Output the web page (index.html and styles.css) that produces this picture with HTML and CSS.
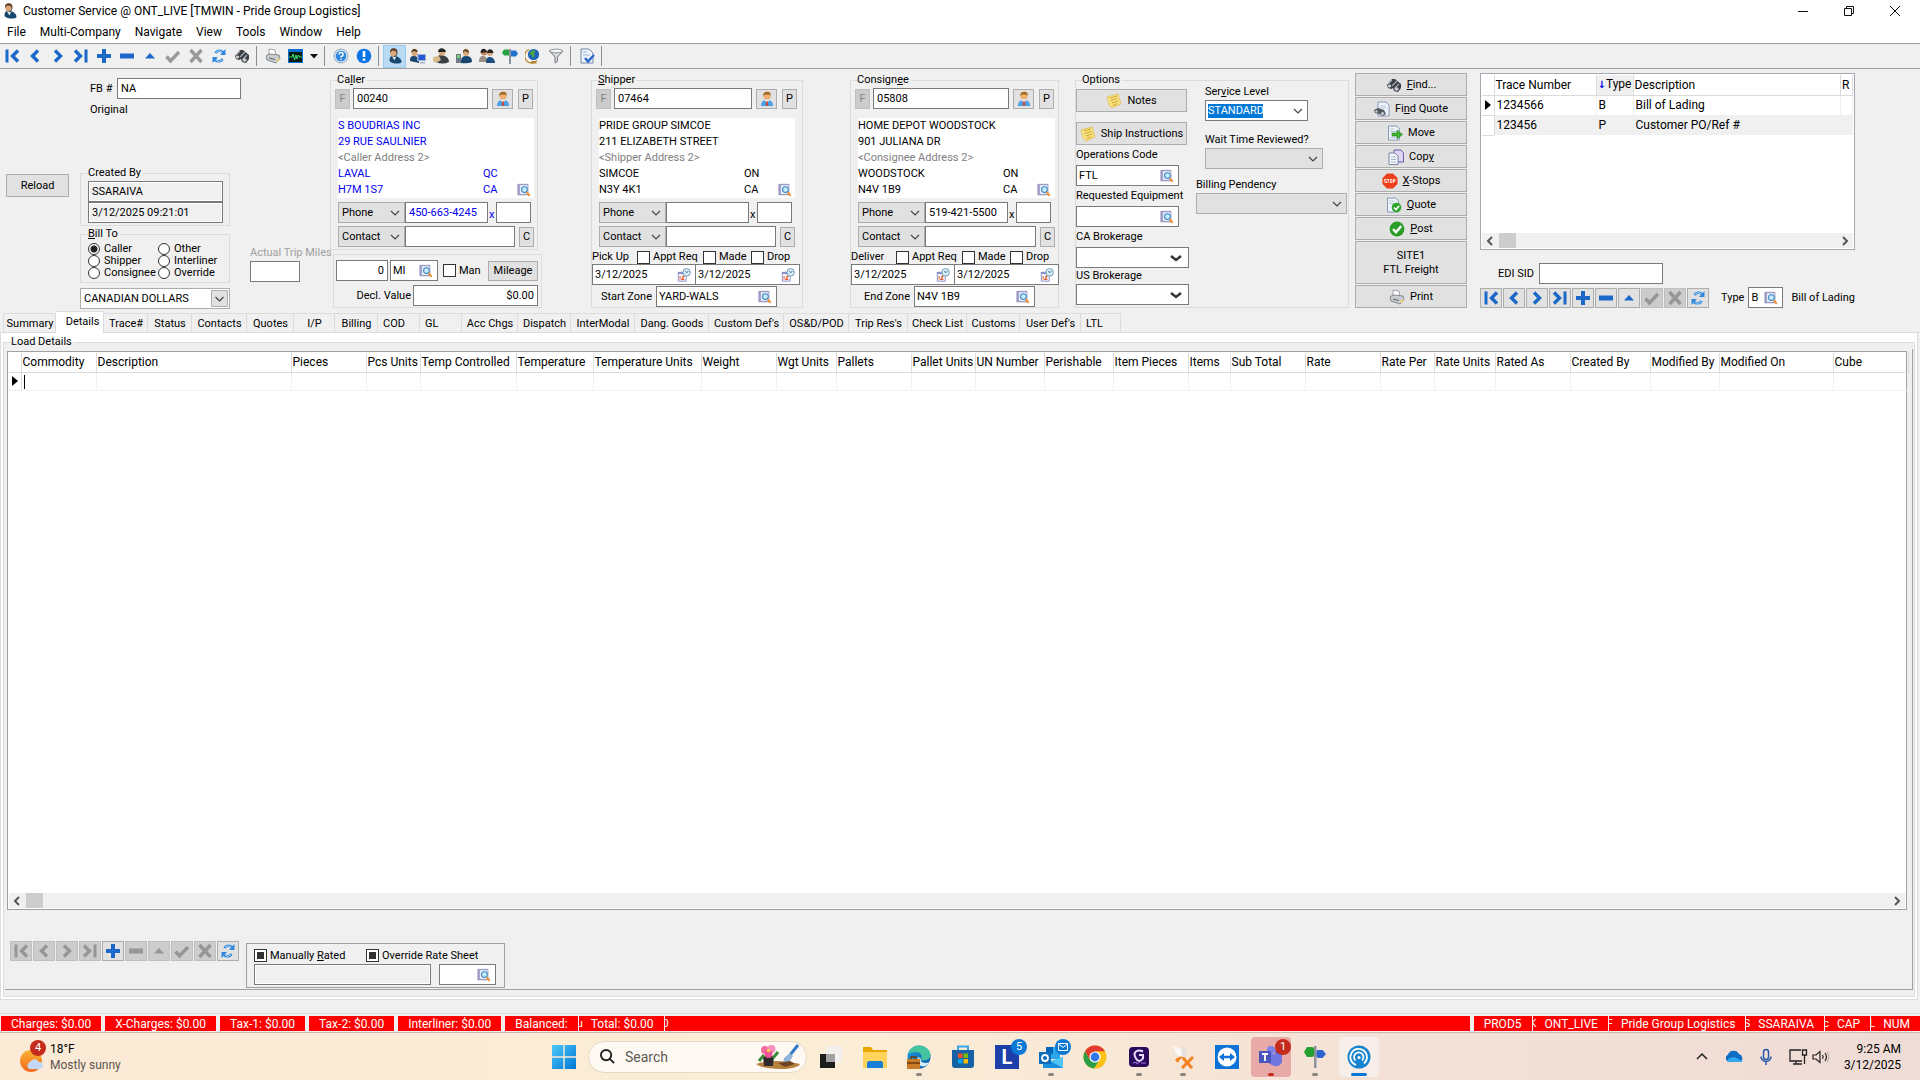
FILE: index.html
```html
<!DOCTYPE html>
<html lang="en">
<head>
<meta charset="utf-8">
<title>Customer Service @ ONT_LIVE [TMWIN - Pride Group Logistics]</title>
<link rel="stylesheet" href="styles.css">
</head>
<body>
<svg class="sprite" aria-hidden="true">
  <defs>
    <linearGradient id="g-win" x1="0" y1="0" x2="1" y2="1"><stop offset="0" stop-color="#4cc8fa"/><stop offset="1" stop-color="#0078d4"/></linearGradient>
    <linearGradient id="g-edge" x1="0" y1="0" x2="1" y2="1"><stop offset="0" stop-color="#1b9de2"/><stop offset="1" stop-color="#0c59a4"/></linearGradient>
    <linearGradient id="g-sun" x1="0" y1="0" x2="0" y2="1"><stop offset="0" stop-color="#fbb034"/><stop offset="1" stop-color="#f26a1b"/></linearGradient>
  </defs>
  <symbol id="first" viewBox="0 0 16 16"><path d="M3 1.500v13" stroke="currentColor" stroke-width="3"/><path d="M14 2.500L8.500 8l5.500 5.500" fill="none" stroke="currentColor" stroke-width="3.400"/></symbol>
  <symbol id="prev" viewBox="0 0 16 16"><path d="M11 2.500L5.500 8l5.500 5.500" fill="none" stroke="currentColor" stroke-width="3.400"/></symbol>
  <symbol id="next" viewBox="0 0 16 16"><path d="M5 2.500L10.500 8L5 13.500" fill="none" stroke="currentColor" stroke-width="3.400"/></symbol>
  <symbol id="last" viewBox="0 0 16 16"><path d="M13 1.500v13" stroke="currentColor" stroke-width="3"/><path d="M2 2.500L7.500 8L2 13.500" fill="none" stroke="currentColor" stroke-width="3.400"/></symbol>
  <symbol id="plus" viewBox="0 0 16 16"><path d="M8 1v14M1 8h14" stroke="currentColor" stroke-width="4"/></symbol>
  <symbol id="minus" viewBox="0 0 16 16"><path d="M1 5.500h14v5H1z" fill="currentColor"/></symbol>
  <symbol id="up" viewBox="0 0 16 16"><path d="M3 10.500L8 5l5 5.500z" fill="currentColor"/></symbol>
  <symbol id="tick" viewBox="0 0 16 16"><path d="M1.500 8.500l4 4.500L14 4" fill="none" stroke="currentColor" stroke-width="3.400"/></symbol>
  <symbol id="cross" viewBox="0 0 16 16"><path d="M2.500 2l11 12M13.500 2l-11 12" fill="none" stroke="currentColor" stroke-width="3.400"/></symbol>
  <symbol id="refresh" viewBox="0 0 16 16"><path d="M4.500 5.200A4.800 4.800 0 0 1 12 4M11.500 10.800A4.800 4.800 0 0 1 4 12" fill="none" stroke="#2f86dc" stroke-width="2.600"/><path d="M14.500 1v6H9zM1.500 15V9H7z" fill="#2f86dc"/><path d="M5 4.500A4.500 4.500 0 0 1 11 3.500M11 11.500A4.500 4.500 0 0 1 5 12.500" fill="none" stroke="#a9d6fb" stroke-width="1"/></symbol>
  <symbol id="binoculars" viewBox="0 0 16 16"><path d="M1 8l5-6 3 0 6 5 0 4-3 4-4-1-1-3-2 1-3-1z" fill="#3a3f45"/><path d="M2 7l4-4M6 9l5-5M9 11l4-4" stroke="#a9afb5" stroke-width="1.200"/><ellipse cx="10.500" cy="12" rx="2.200" ry="1.800" fill="#c7ccd0"/><ellipse cx="3.500" cy="9" rx="1.700" ry="1.500" fill="#c7ccd0"/></symbol>
  <symbol id="printer" viewBox="0 0 16 16"><path d="M4 1l6 1 1 6-7-1z" fill="#fff" stroke="#8b9096" stroke-width=".8"/><path d="M1 8l3-2 10 1 1 4-4 4-9-3z" fill="#c9cdd1" stroke="#6f7479" stroke-width=".8"/><path d="M4 10l6 1.500" stroke="#5b6065"/><path d="M11 13l3-3 1 1-3 3z" fill="#f7dd6a"/></symbol>
  <symbol id="scope" viewBox="0 0 16 16"><path d="M0 1h15v14H0z" fill="#0b6fd3"/><path d="M1 4h13v10H1z" fill="#071b12"/><path d="M1 9h3l1-3 1.500 6L8 7l1 4 1.500-4 1 2H14" fill="none" stroke="#37e06a"/></symbol>
  <symbol id="drop" viewBox="0 0 8 16"><path d="M0 6h8l-4 4.500z" fill="#111"/></symbol>
  <symbol id="help" viewBox="0 0 16 16"><circle cx="8" cy="8" r="7" fill="#cfe4f8" stroke="#98a8b8"/><circle cx="8" cy="8" r="5.200" fill="#2b86db"/><path d="M6 6.500a2 2 0 1 1 2 2v1M8 10.600v1.400" fill="none" stroke="#fff" stroke-width="1.400"/></symbol>
  <symbol id="alert" viewBox="0 0 16 16"><circle cx="8" cy="8" r="7.300" fill="#0c74e4"/><path d="M8 3v6M8 10.500v2.300" stroke="#fff" stroke-width="2.600"/></symbol>
  <symbol id="agent" viewBox="0 0 16 16"><path d="M2.500 13c0-4 1-5 4-5 5 0 8 3 8 6-1 2-9 2.500-12-1z" fill="#17466f"/><path d="M5 8.500l2.500 4L9 9z" fill="#e9eef3"/><ellipse cx="6.500" cy="4.800" rx="3.200" ry="4" fill="#d9a97d"/><path d="M3.200 5C2.500 1 5 0 7.500.3s3.800 3 2.500 6L8.500 3 5 2.500z" fill="#5e4128"/><path d="M9.800 5.500c0 2-1 3-3 3" fill="none" stroke="#444"/></symbol>
  <symbol id="agentpc" viewBox="0 0 16 16"><path d="M0 13c0-4 1-5 4-5s5 2 5 7z" fill="#17466f"/><ellipse cx="4.500" cy="4.500" rx="3" ry="3.800" fill="#d9a97d"/><path d="M1.300 5C1 0 7 0 7.800 4L3 3z" fill="#4e3521"/><path d="M7 6h9v7H7zM10 14h5v1.500h-5z" fill="#9fb0c8"/><path d="M8.500 7h6.500v5H8.500z" fill="#2458d8"/></symbol>
  <symbol id="courier" viewBox="0 0 16 16"><path d="M3 14c0-5 2-7 5-7s8 2 8 7q-6 3-13 0z" fill="#3a3f45"/><circle cx="9" cy="4.500" r="3.200" fill="#d9a97d"/><path d="M5 4c0-5 7-5 8 0z" fill="#22262a"/><path d="M0 9l6-1 2 4-5 3-3-2z" fill="#d7b98a"/></symbol>
  <symbol id="agentgrid" viewBox="0 0 16 16"><path d="M5 15c0-5 1-7 5-7s6 2 6 6q-4 2-11 1z" fill="#17466f"/><ellipse cx="10" cy="4.500" rx="3" ry="3.800" fill="#d9a97d"/><path d="M7 5C6 0 13 0 13 5L9 3z" fill="#5e4128"/><path d="M0 6h5v9H0z" fill="#6f7b86"/><path d="M1 7h3v3H1z" fill="#73d26a"/></symbol>
  <symbol id="people" viewBox="0 0 16 16"><path d="M0 14c0-5 2-6 4-6s5 2 5 6z" fill="#9d8f86"/><path d="M7 15c0-5 2-6 4-6s5 2 5 6z" fill="#1c4f86"/><circle cx="5" cy="4.500" r="3" fill="#c08a62"/><circle cx="11" cy="5" r="3" fill="#d9a97d"/><path d="M1.500 5c0-6 6-5 6.500-1zM8 5c0-5 6-5 6.500 0z" fill="#2a2320"/></symbol>
  <symbol id="sign" viewBox="0 0 16 16"><path d="M7 1h2v15H7z" fill="#8d949b"/><path d="M0 4.500L2 1.500h5v6H2z" fill="#27a342"/><path d="M9 2.500h5l2 3L14 8.500H9z" fill="#2472cf"/></symbol>
  <symbol id="globe" viewBox="0 0 16 16"><path d="M5 15.500h7l-2-2.500H7z" fill="#a97b25"/><path d="M4 1.500a7 7 0 1 0 8 11" fill="none" stroke="#b98a2c" stroke-width="1.300"/><circle cx="8.500" cy="6.500" r="5.600" fill="#1d62b8"/><path d="M6 3l3-1 1.500 2-1.500 2 1 2-2.500 2-1-3-2-1z" fill="#49a24a"/></symbol>
  <symbol id="funnel" viewBox="0 0 16 16"><path d="M1.500 3L7 9v6l2.500-1.500V9L15 3z" fill="#d4d7da" stroke="#777c82"/><ellipse cx="8.200" cy="3" rx="6.500" ry="1.800" fill="#f4f5f6" stroke="#777c82" stroke-width=".8"/></symbol>
  <symbol id="doccheck" viewBox="0 0 16 16"><path d="M2 1h8l4 4v10H2z" fill="#eef4fb" stroke="#7187a5"/><path d="M4 4h4M4 7h7" stroke="#9fb4cf"/><path d="M6 10l3 3.500L15 7" fill="none" stroke="#2a66c8" stroke-width="2.400"/></symbol>
  <symbol id="person" viewBox="0 0 16 16"><path d="M2 15c0-4 2-6 6-6s6 2 6 6z" fill="#4aa0e4"/><path d="M6 9l2 4 2-4z" fill="#fff"/><path d="M7.400 10h1.200l.6 4L8 15l-1.200-1z" fill="#e0392b"/><circle cx="8" cy="5" r="3.600" fill="#efb070"/><path d="M4.200 5C4 1 7 .5 9 .7s3 2 2.800 4L10 3.500H6z" fill="#a06a1c"/></symbol>
  <symbol id="lookup" viewBox="0 0 16 16"><path d="M1 1.500h11.500v12H1z" fill="#a9a6cf" stroke="#7f7cab" stroke-width=".8"/><path d="M3.500 2.500H12v10H3.500z" fill="#e6effa"/><circle cx="8.500" cy="7.500" r="3.300" fill="#c8ecfb" stroke="#3b87c4" stroke-width="1.200"/><path d="M11 10.500l3.500 4" stroke="#ee9440" stroke-width="2.400"/></symbol>
  <symbol id="calendar" viewBox="0 0 16 16"><path d="M1.500 5h9v10h-9z" fill="#fff" stroke="#7c84c0"/><path d="M1 4.500h10v2.500H1z" fill="#8b90cc"/><path d="M3.500 9v4M5.500 9.500h2.500l-2.500 3.500h3" fill="none" stroke="#e0562a" stroke-width="1.200"/><circle cx="11" cy="5" r="4.300" fill="#d8f0fc" stroke="#5e8fb4"/><path d="M9.500 3.500L11 5.500l2-2" fill="none" stroke="#2c4c66"/></symbol>
  <symbol id="note" viewBox="0 0 16 16"><path d="M1 4l11-3 3 10-9 4-3-3z" fill="#fbe384" stroke="#d8b84a" stroke-width=".7"/><path d="M4 5l7-2M4.500 7.500l7-2M5.500 10l7-2M6.500 12.500l5-1.800" stroke="#c9a52e"/></symbol>
  <symbol id="findquote" viewBox="0 0 16 16"><path d="M4 1h8l3 3v11H4z" fill="#edf3fb" stroke="#7187a5" stroke-width=".8"/><path d="M6 5h6M6 7h6" stroke="#b8c7da"/><path d="M0 9l4-2 6 2 2 4-3 2-4-2-4-1z" fill="#555a60"/><circle cx="8.500" cy="12.500" r="1.600" fill="#c7ccd0"/><circle cx="2.500" cy="10.500" r="1.200" fill="#c7ccd0"/></symbol>
  <symbol id="move" viewBox="0 0 16 16"><path d="M1.500 1h8l3 3v11h-11z" fill="#edf3fb" stroke="#7187a5" stroke-width=".8"/><path d="M3 4h4M3 6.500h6M3 12.500h6" stroke="#b8c7da"/><path d="M5 8h5V5l5.500 4.500L10 14v-3H5z" fill="#3cb52e" stroke="#257c1c" stroke-width=".6"/></symbol>
  <symbol id="copy" viewBox="0 0 16 16"><path d="M6 1h7l2.500 3v9H6z" fill="#ddd6f2" stroke="#7257b0"/><path d="M1 4h6l3 3v8.500H1z" fill="#f3f6fb" stroke="#7c86a8"/><path d="M3 8h5M3 10.500h5M3 13h5" stroke="#a8b6cc"/></symbol>
  <symbol id="stop" viewBox="0 0 16 16"><path d="M5 .5h6L15.500 5v6L11 15.500H5L.5 11V5z" fill="#ee3f1c"/><path d="M4.500 6.500h-2v1.500h2v1.500h-2M5 6.500h2.500M6.300 6.500V10M8.500 6.500h1.500v3H8.500zM11.500 10V6.500H13v1.700h-1.500" stroke="#fff" stroke-width=".8" fill="none"/></symbol>
  <symbol id="quote" viewBox="0 0 16 16"><path d="M1.500 1h8l3 3v11h-11z" fill="#edf3fb" stroke="#7187a5" stroke-width=".8"/><path d="M3 4h5M3 6.500h5" stroke="#b8c7da"/><circle cx="10.500" cy="10.500" r="4.800" fill="#2fa52c"/><path d="M8 10.500l2 2 3.200-3.700" fill="none" stroke="#fff" stroke-width="1.600"/></symbol>
  <symbol id="post" viewBox="0 0 16 16"><circle cx="8" cy="8" r="7.400" fill="#2a9d27"/><path d="M4 8.200l3 3L12.300 5" fill="none" stroke="#fff" stroke-width="2.400"/></symbol>
</svg>

<div class="app">
  <header class="titlebar">
    <svg class="ic"><use href="#agent"/></svg>
    <h1>Customer Service @ ONT_LIVE [TMWIN - Pride Group Logistics]</h1>
    <div class="winbtns">
      <button aria-label="Minimize"><svg viewBox="0 0 10 10"><path d="M0 5.500h10"/></svg></button>
      <button aria-label="Restore"><svg viewBox="0 0 10 10"><path d="M.5 2.500h7v7h-7zM2.500 2.500v-2h7v7h-2"/></svg></button>
      <button aria-label="Close"><svg viewBox="0 0 10 10"><path d="M0 0l10 10M10 0L0 10"/></svg></button>
    </div>
  </header>
  <nav class="menubar">
    <a href="#">File</a><a href="#">Multi-Company</a><a href="#">Navigate</a><a href="#">View</a><a href="#">Tools</a><a href="#">Window</a><a href="#">Help</a>
  </nav>

  <div class="toolbar" role="toolbar">
    <button aria-label="First"><svg class="ic"><use href="#first"/></svg></button>
    <button aria-label="Previous"><svg class="ic"><use href="#prev"/></svg></button>
    <button aria-label="Next"><svg class="ic"><use href="#next"/></svg></button>
    <button aria-label="Last"><svg class="ic"><use href="#last"/></svg></button>
    <button aria-label="Insert"><svg class="ic"><use href="#plus"/></svg></button>
    <button aria-label="Delete"><svg class="ic"><use href="#minus"/></svg></button>
    <button aria-label="Edit"><svg class="ic"><use href="#up"/></svg></button>
    <button aria-label="Save" disabled><svg class="ic"><use href="#tick"/></svg></button>
    <button aria-label="Cancel" disabled><svg class="ic"><use href="#cross"/></svg></button>
    <button aria-label="Refresh"><svg class="ic"><use href="#refresh"/></svg></button>
    <button aria-label="Find"><svg class="ic"><use href="#binoculars"/></svg></button>
    <i class="sep"></i>
    <button aria-label="Print"><svg class="ic"><use href="#printer"/></svg></button>
    <button aria-label="Monitor"><svg class="ic"><use href="#scope"/></svg></button>
    <button class="narrow" aria-label="More"><svg class="ic"><use href="#drop"/></svg></button>
    <i class="sep"></i>
    <button aria-label="Help"><svg class="ic"><use href="#help"/></svg></button>
    <button aria-label="Alerts"><svg class="ic"><use href="#alert"/></svg></button>
    <i class="sep"></i>
    <button class="on" aria-label="Customer service"><svg class="ic"><use href="#agent"/></svg></button>
    <button aria-label="Dispatch"><svg class="ic"><use href="#agentpc"/></svg></button>
    <button aria-label="Drivers"><svg class="ic"><use href="#courier"/></svg></button>
    <button aria-label="Billing"><svg class="ic"><use href="#agentgrid"/></svg></button>
    <button aria-label="Customers"><svg class="ic"><use href="#people"/></svg></button>
    <button aria-label="Routes"><svg class="ic"><use href="#sign"/></svg></button>
    <button aria-label="Map"><svg class="ic"><use href="#globe"/></svg></button>
    <button aria-label="Filter"><svg class="ic"><use href="#funnel"/></svg></button>
    <i class="sep"></i>
    <button aria-label="Audit"><svg class="ic"><use href="#doccheck"/></svg></button>
    <i class="sep"></i>
  </div>

  <main class="form">
    <section class="bill">
      <div class="fb"><label for="fb">FB #</label><input id="fb" value="NA"></div>
      <p class="kind">Original</p>
      <div class="billgrid">
        <button class="btn reload">Reload</button>
        <fieldset class="created">
          <legend>Created By</legend>
          <input class="ro" aria-label="Created by" value="SSARAIVA" readonly>
          <input class="ro" aria-label="Created on" value="3/12/2025 09:21:01" readonly>
        </fieldset>
        <fieldset class="billto">
          <legend><u>B</u>ill To</legend>
          <label><input type="radio" name="bt" checked>Caller</label>
          <label><input type="radio" name="bt">Other</label>
          <label><input type="radio" name="bt">Shipper</label>
          <label><input type="radio" name="bt">Interliner</label>
          <label><input type="radio" name="bt">Consignee</label>
          <label><input type="radio" name="bt">Override</label>
        </fieldset>
        <div class="miles"><label for="atm">Actual Trip Miles</label><input id="atm"></div>
        <select class="currency" aria-label="Currency"><option>CANADIAN DOLLARS</option></select>
      </div>
    </section>

    <section class="callercol">
      <fieldset class="party">
        <legend>Ca<u>l</u>ler</legend>
        <div class="code">
          <button class="btn mini" disabled>F</button><input aria-label="Caller code" value="00240">
          <button class="btn pic" aria-label="Caller profile"><svg class="ic"><use href="#person"/></svg></button><button class="btn mini">P</button>
        </div>
        <div class="addr blue">
          <p>S BOUDRIAS INC</p><p>29 RUE SAULNIER</p><p class="hint">&lt;Caller Address 2&gt;</p>
          <p class="two"><span>LAVAL</span><span>QC</span></p>
          <p class="two"><span>H7M 1S7</span><span>CA</span><svg class="ic"><use href="#lookup"/></svg></p>
        </div>
        <div class="line">
          <select class="grey" aria-label="Caller phone type"><option>Phone</option></select><input class="tel blue" aria-label="Caller phone" value="450-663-4245"><span class="x blue">x</span><input class="ext" aria-label="Caller extension">
        </div>
        <div class="line">
          <select class="grey" aria-label="Caller contact type"><option>Contact</option></select><input class="contact" aria-label="Caller contact"><button class="btn mini">C</button>
        </div>
      </fieldset>
      <div class="distance">
        <div class="drow">
          <input class="num dist" aria-label="Distance" value="0">
          <span class="look unit"><input aria-label="Unit" value="MI"><svg class="ic"><use href="#lookup"/></svg></span>
          <label><input type="checkbox">Man</label>
          <button class="btn">Mileage</button>
        </div>
        <div class="drow decl"><label for="decl">Decl. Value</label><input id="decl" class="num" value="$0.00"></div>
      </div>
    </section>

    <fieldset class="party shipper">
      <legend><u>S</u>hipper</legend>
      <div class="code">
        <button class="btn mini" disabled>F</button><input aria-label="Shipper code" value="07464">
        <button class="btn pic" aria-label="Shipper profile"><svg class="ic"><use href="#person"/></svg></button><button class="btn mini">P</button>
      </div>
      <div class="addr">
        <p>PRIDE GROUP SIMCOE</p><p>211 ELIZABETH STREET</p><p class="hint">&lt;Shipper Address 2&gt;</p>
        <p class="two"><span>SIMCOE</span><span>ON</span></p>
        <p class="two"><span>N3Y 4K1</span><span>CA</span><svg class="ic"><use href="#lookup"/></svg></p>
      </div>
      <div class="line">
        <select class="grey" aria-label="Shipper phone type"><option>Phone</option></select><input class="tel" aria-label="Shipper phone"><span class="x">x</span><input class="ext" aria-label="Shipper extension">
      </div>
      <div class="line">
        <select class="grey" aria-label="Shipper contact type"><option>Contact</option></select><input class="contact" aria-label="Shipper contact"><button class="btn mini">C</button>
      </div>
      <div class="checks"><span>Pick Up</span><label><input type="checkbox">Appt Req</label><label><input type="checkbox">Made</label><label><input type="checkbox">Drop</label></div>
      <div class="dates">
        <span class="look"><input aria-label="Pick up from" value="3/12/2025"><svg class="ic"><use href="#calendar"/></svg></span>
        <span class="look"><input aria-label="Pick up to" value="3/12/2025"><svg class="ic"><use href="#calendar"/></svg></span>
      </div>
      <div class="zone"><label for="sz">Start Zone</label><span class="look"><input id="sz" value="YARD-WALS"><svg class="ic"><use href="#lookup"/></svg></span></div>
    </fieldset>

    <fieldset class="party consignee">
      <legend>Consign<u>e</u>e</legend>
      <div class="code">
        <button class="btn mini" disabled>F</button><input aria-label="Consignee code" value="05808">
        <button class="btn pic" aria-label="Consignee profile"><svg class="ic"><use href="#person"/></svg></button><button class="btn mini">P</button>
      </div>
      <div class="addr">
        <p>HOME DEPOT WOODSTOCK</p><p>901 JULIANA DR</p><p class="hint">&lt;Consignee Address 2&gt;</p>
        <p class="two"><span>WOODSTOCK</span><span>ON</span></p>
        <p class="two"><span>N4V 1B9</span><span>CA</span><svg class="ic"><use href="#lookup"/></svg></p>
      </div>
      <div class="line">
        <select class="grey" aria-label="Consignee phone type"><option>Phone</option></select><input class="tel" aria-label="Consignee phone" value="519-421-5500"><span class="x">x</span><input class="ext" aria-label="Consignee extension">
      </div>
      <div class="line">
        <select class="grey" aria-label="Consignee contact type"><option>Contact</option></select><input class="contact" aria-label="Consignee contact"><button class="btn mini">C</button>
      </div>
      <div class="checks"><span>Deliver</span><label><input type="checkbox">Appt Req</label><label><input type="checkbox">Made</label><label><input type="checkbox">Drop</label></div>
      <div class="dates">
        <span class="look"><input aria-label="Deliver from" value="3/12/2025"><svg class="ic"><use href="#calendar"/></svg></span>
        <span class="look"><input aria-label="Deliver to" value="3/12/2025"><svg class="ic"><use href="#calendar"/></svg></span>
      </div>
      <div class="zone"><label for="ez">End Zone</label><span class="look"><input id="ez" value="N4V 1B9"><svg class="ic"><use href="#lookup"/></svg></span></div>
    </fieldset>

    <fieldset class="options">
      <legend>Options</legend>
      <div class="optcols">
        <div class="optleft">
          <button class="btn"><svg class="ic"><use href="#note"/></svg>Notes</button>
          <button class="btn"><svg class="ic"><use href="#note"/></svg>Ship Instructions</button>
          <label for="opc">Operations Code</label>
          <span class="look"><input id="opc" value="FTL"><svg class="ic"><use href="#lookup"/></svg></span>
          <label for="req">Requested Equipment</label>
          <span class="look"><input id="req"><svg class="ic"><use href="#lookup"/></svg></span>
          <label for="cab">CA Brokerage</label>
          <select id="cab" class="bold"><option></option></select>
          <label for="usb">US Brokerage</label>
          <select id="usb" class="bold"><option></option></select>
        </div>
        <div class="optright">
          <label for="svc">Ser<u>v</u>ice Level</label>
          <div class="combo"><input id="svc" value="STANDARD"><svg viewBox="0 0 10 10"><path d="M1 3l4 4 4-4"/></svg></div>
          <label for="wait">Wait Time Reviewed?</label>
          <select id="wait" class="grey"><option></option></select>
          <label for="pend" class="out">Billing Pendency</label>
          <select id="pend" class="grey out"><option></option></select>
        </div>
      </div>
    </fieldset>

    <div class="actions">
      <button class="btn"><svg class="ic"><use href="#binoculars"/></svg><span><u>F</u>ind...</span></button>
      <button class="btn"><svg class="ic"><use href="#findquote"/></svg><span>Fi<u>n</u>d Quote</span></button>
      <button class="btn"><svg class="ic"><use href="#move"/></svg><span>Move</span></button>
      <button class="btn"><svg class="ic"><use href="#copy"/></svg><span>Cop<u>y</u></span></button>
      <button class="btn"><svg class="ic"><use href="#stop"/></svg><span><u>X</u>-Stops</span></button>
      <button class="btn"><svg class="ic"><use href="#quote"/></svg><span><u>Q</u>uote</span></button>
      <button class="btn"><svg class="ic"><use href="#post"/></svg><span><u>P</u>ost</span></button>
      <button class="btn"><span>SITE1<br>FTL Freight</span></button>
      <button class="btn"><svg class="ic"><use href="#printer"/></svg><span>Print</span></button>
    </div>

    <section class="trace">
      <div class="tracebox">
        <table>
          <colgroup><col class="c-mark"><col class="c-num"><col class="c-type"><col><col class="c-r"></colgroup>
          <thead><tr><th></th><th>Trace Number</th><th class="sorted"><b>↓</b>Type</th><th>Description</th><th>R</th></tr></thead>
          <tbody>
            <tr><td class="mark current"></td><td>1234566</td><td>B</td><td>Bill of Lading</td><td></td></tr>
            <tr class="alt"><td class="mark"></td><td>123456</td><td>P</td><td>Customer PO/Ref #</td><td></td></tr>
          </tbody>
        </table>
        <div class="hscroll"><svg viewBox="0 0 10 10"><path d="M7 1L3 5l4 4"/></svg><i></i><svg viewBox="0 0 10 10"><path d="M3 1l4 4-4 4"/></svg></div>
      </div>
      <div class="edi"><label for="edi">EDI SID</label><input id="edi"></div>
      <div class="tracenav">
        <div class="navbar">
          <button class="btn" aria-label="First"><svg class="ic"><use href="#first"/></svg></button>
          <button class="btn" aria-label="Previous"><svg class="ic"><use href="#prev"/></svg></button>
          <button class="btn" aria-label="Next"><svg class="ic"><use href="#next"/></svg></button>
          <button class="btn" aria-label="Last"><svg class="ic"><use href="#last"/></svg></button>
          <button class="btn" aria-label="Insert"><svg class="ic"><use href="#plus"/></svg></button>
          <button class="btn" aria-label="Delete"><svg class="ic"><use href="#minus"/></svg></button>
          <button class="btn" aria-label="Edit"><svg class="ic"><use href="#up"/></svg></button>
          <button class="btn" aria-label="Save" disabled><svg class="ic"><use href="#tick"/></svg></button>
          <button class="btn" aria-label="Cancel" disabled><svg class="ic"><use href="#cross"/></svg></button>
          <button class="btn" aria-label="Refresh"><svg class="ic"><use href="#refresh"/></svg></button>
        </div>
        <label for="tt">Type</label>
        <span class="look"><input id="tt" value="B"><svg class="ic"><use href="#lookup"/></svg></span>
        <span class="ttname">Bill of Lading</span>
      </div>
    </section>
  </main>

  <div class="tabs" role="tablist">
    <button role="tab">Summary</button><button role="tab" class="sel" aria-selected="true">Details</button><button role="tab">Trace#</button><button role="tab">Status</button><button role="tab">Contacts</button><button role="tab">Quotes</button><button role="tab">I/P</button><button role="tab">Billing</button><button role="tab" class="start">COD</button><button role="tab" class="start">GL</button><button role="tab">Acc Chgs</button><button role="tab">Dispatch</button><button role="tab">InterModal</button><button role="tab">Dang. Goods</button><button role="tab">Custom Def's</button><button role="tab">OS&amp;D/POD</button><button role="tab">Trip Res's</button><button role="tab">Check List</button><button role="tab">Customs</button><button role="tab">User Def's</button><button role="tab" class="start">LTL</button>
  </div>

  <section class="page">
    <fieldset class="load">
      <legend>Load Details</legend>
      <div class="loadinner">
        <div class="gridbox">
          <table class="details">
            <colgroup><col class="c-mark"><col class="d75"><col class="d195"><col class="d75"><col class="d54"><col class="d96"><col class="d77"><col class="d108"><col class="d75"><col class="d60"><col class="d75"><col class="d64"><col class="d69"><col class="d69"><col class="d75"><col class="d42"><col class="d75"><col class="d75"><col class="d54"><col class="d61"><col class="d75"><col class="d80"><col class="d69"><col class="d114"><col class="d75"></colgroup>
            <thead><tr><th></th><th>Commodity</th><th>Description</th><th>Pieces</th><th>Pcs Units</th><th>Temp Controlled</th><th>Temperature</th><th>Temperature Units</th><th>Weight</th><th>Wgt Units</th><th>Pallets</th><th>Pallet Units</th><th>UN Number</th><th>Perishable</th><th>Item Pieces</th><th>Items</th><th>Sub Total</th><th>Rate</th><th>Rate Per</th><th>Rate Units</th><th>Rated As</th><th>Created By</th><th>Modified By</th><th>Modified On</th><th>Cube</th></tr></thead>
            <tbody><tr><td class="mark current"></td><td class="editing"></td><td></td><td></td><td></td><td></td><td></td><td></td><td></td><td></td><td></td><td></td><td></td><td></td><td></td><td></td><td></td><td></td><td></td><td></td><td></td><td></td><td></td><td></td><td></td></tr></tbody>
          </table>
          <div class="hscroll"><svg viewBox="0 0 10 10"><path d="M7 1L3 5l4 4"/></svg><i></i><svg viewBox="0 0 10 10"><path d="M3 1l4 4-4 4"/></svg></div>
        </div>
        <div class="loadfoot">
          <div class="navbar">
            <button class="btn" aria-label="First" disabled><svg class="ic"><use href="#first"/></svg></button>
            <button class="btn" aria-label="Previous" disabled><svg class="ic"><use href="#prev"/></svg></button>
            <button class="btn" aria-label="Next" disabled><svg class="ic"><use href="#next"/></svg></button>
            <button class="btn" aria-label="Last" disabled><svg class="ic"><use href="#last"/></svg></button>
            <button class="btn" aria-label="Insert"><svg class="ic"><use href="#plus"/></svg></button>
            <button class="btn" aria-label="Delete" disabled><svg class="ic"><use href="#minus"/></svg></button>
            <button class="btn" aria-label="Edit" disabled><svg class="ic"><use href="#up"/></svg></button>
            <button class="btn" aria-label="Save" disabled><svg class="ic"><use href="#tick"/></svg></button>
            <button class="btn" aria-label="Cancel" disabled><svg class="ic"><use href="#cross"/></svg></button>
            <button class="btn" aria-label="Refresh"><svg class="ic"><use href="#refresh"/></svg></button>
          </div>
          <div class="rated">
            <div class="ratedrow"><label><input type="checkbox" class="mixed" checked><span>Manually <u>R</u>ated</span></label><label><input type="checkbox" class="mixed" checked>Override Rate Sheet</label></div>
            <div class="ratedrow"><input class="ro" aria-label="Manual rate" readonly><span class="look"><input aria-label="Rate sheet"><svg class="ic"><use href="#lookup"/></svg></span></div>
          </div>
        </div>
      </div>
    </fieldset>
  </section>

  <footer class="status">
    <span>Charges: $0.00</span><span>X-Charges: $0.00</span><span>Tax-1: $0.00</span><span>Tax-2: $0.00</span><span>Interliner: $0.00</span><span>Balanced:</span><span class="tight"><i>u</i>Total: $0.00</span><span class="fill"><i>0</i></span><span>PROD5</span><span class="tight"><i>K</i>ONT_LIVE</span><span class="tight"><i>F</i>Pride Group Logistics</span><span class="tight"><i>S</i>SSARAIVA</span><span class="tight"><i>c</i>CAP</span><span class="tight"><i>L</i>NUM</span>
  </footer>

  <div class="taskbar">
    <div class="weather">
      <svg viewBox="0 0 28 32"><circle cx="12" cy="20" r="11" fill="url(#g-sun)"/><path d="M10 28a4 4 0 0 1 1-7 5 5 0 0 1 9 0 3.500 3.500 0 0 1 1 7z" fill="#c5d8f7"/></svg>
      <b class="badge red">4</b>
      <p>18°F<br><span>Mostly sunny</span></p>
    </div>
    <div class="apps">
      <button class="app-btn" aria-label="Start"><svg viewBox="0 0 24 24"><path d="M0 0h11.300v11.300H0zM12.700 0H24v11.300H12.700zM0 12.700h11.300V24H0zM12.700 12.700H24V24H12.700z" fill="url(#g-win)"/></svg></button>
      <label class="search"><svg viewBox="0 0 16 16"><circle cx="6.500" cy="6.500" r="5.500"/><path d="M10.500 10.500L15 15"/></svg><input placeholder="Search" aria-label="Search">
        <svg class="flower" viewBox="0 0 48 26"><path d="M2 20q20-6 44 0-3 5-20 5T2 20z" fill="#b9813f"/><path d="M9 12h11l-1 10h-9z" fill="#2f2b2c"/><path d="M5 17l5-6M19 14l5-6" stroke="#3d8b37" stroke-width="3"/><circle cx="11" cy="6" r="4" fill="#f36aa5"/><circle cx="17.500" cy="5" r="4" fill="#f890bd"/><circle cx="14.500" cy="10" r="4" fill="#ee5495"/><circle cx="14.500" cy="6.500" r="1.700" fill="#f8d34d"/><path d="M44 1l-8 10" stroke="#2f78c4" stroke-width="3"/><path d="M36 9l3 3-5 8-5-1 1-5z" fill="#8fb4d6"/><path d="M24 19l12-2 5 3-10 3z" fill="#6d4322"/></svg>
      </label>
      <button class="app-btn" aria-label="Task view"><svg viewBox="0 0 24 24"><path d="M1 9h15v14H1z" fill="#1d1d1d"/><path d="M7 1h16v16H7z" fill="#f3f1ef"/><path d="M7 9h9v8H7z" fill="#a5a3a1"/></svg></button>
      <button class="app-btn" aria-label="File Explorer"><svg viewBox="0 0 24 24"><path d="M0 2h8l2 3h14v17H0z" fill="#e9a500"/><path d="M0 7h24v16H0z" fill="#ffd35c"/><path d="M4 23v-5q0-2 2-2h12q2 0 2 2v5z" fill="#1a7fd4"/></svg></button>
      <button class="app-btn run" aria-label="Edge"><svg viewBox="0 0 24 24"><circle cx="12" cy="12" r="11.500" fill="url(#g-edge)"/><path d="M3 5Q8 0 14 .7q9 2 9.500 9.300-.5 5-7 5.500-3 0-2-2.500 1-5-5-6-5-.5-7.500 2z" fill="#45c4a0"/><path d="M14 14q-1 4 5 4 3 0 4-2-3 7-9 5t-3-9z" fill="#d5eefa"/><path d="M0 14h13v10H0z" fill="#c97a26"/><path d="M4 14v-2h5v2M0 18h13" fill="none" stroke="#6d3a08" stroke-width="1.400"/></svg></button>
      <button class="app-btn" aria-label="Store"><svg viewBox="0 0 24 24"><path d="M7 6V1.500h10V6" fill="none" stroke="#35a5e8" stroke-width="2"/><path d="M1 5h22v15q0 3-3 3H4q-3 0-3-3z" fill="#1762a5"/><path d="M7 8.500h4.500V13H7z" fill="#f25022"/><path d="M12.500 8.500H17V13h-4.500z" fill="#7fba00"/><path d="M7 14h4.500v4.500H7z" fill="#00a4ef"/><path d="M12.500 14H17v4.500h-4.500z" fill="#ffb900"/></svg></button>
      <button class="app-btn" aria-label="L app"><span class="letter">L</span><b class="badge blue">5</b></button>
      <button class="app-btn run" aria-label="Outlook"><svg viewBox="0 0 24 24"><path d="M7 2h14v12H7z" fill="#28a8ea"/><path d="M7 2h7v7H7z" fill="#0364b8"/><path d="M4 12l10 5 10-5v11H4z" fill="#1b8ede"/><path d="M24 12v11L11 16z" fill="#50c4f4"/><path d="M0 7h12v12H0z" fill="#0f6cbd"/><circle cx="6" cy="13" r="3" fill="none" stroke="#fff" stroke-width="1.800"/></svg><b class="badge blue"><svg viewBox="0 0 10 10"><path d="M.5 1.500h9v7h-9zM.5 2L5 5.500 9.500 2" fill="none" stroke="#fff"/></svg></b></button>
      <button class="app-btn" aria-label="Chrome"><svg viewBox="0 0 24 24"><circle cx="12" cy="12" r="11.500" fill="#fbc116"/><path d="M2 6.300A11.500 11.500 0 0 1 22 6.300H12L7 15z" fill="#e33b2e"/><path d="M2 6.300A11.500 11.500 0 0 0 11 23.500l6-9.500-5 3.700L7 15z" fill="#2b9e4a"/><circle cx="12" cy="12" r="5.600" fill="#fff"/><circle cx="12" cy="12" r="4.400" fill="#2f78e6"/></svg></button>
      <button class="app-btn run" aria-label="G app"><svg viewBox="0 0 24 24"><rect x="2" y="2" width="20" height="20" rx="4" fill="#2a0b5c"/><path d="M16 6.500q-4-2-7 0t0 7 7 0V10h-4" fill="none" stroke="#e9dcff" stroke-width="2"/><path d="M6 18l4-1M9 19l4-2M14 18h5" stroke="#a77ae8"/></svg></button>
      <button class="app-btn run" aria-label="X app"><svg viewBox="0 0 24 24"><path d="M2 1q8 1 11 9l-2 4Q4 9 2 1z" fill="#faf8f6"/><path d="M13 0q4 4 2 12l-4-1q-2-6 2-11z" fill="#e6e1de"/><path d="M4 15q5-6 11-2-6-1-8 5z" fill="#f58220"/><path d="M12 13l9 10M22 12L11 23" stroke="#f58220" stroke-width="3"/></svg></button>
      <button class="app-btn" aria-label="TeamViewer"><svg viewBox="0 0 24 24"><path d="M0 0h24v24H0z" fill="#0e73d8"/><circle cx="12" cy="12" r="9.500" fill="#fff"/><path d="M4 12l5-4v2.800h6V8l5 4-5 4v-2.800H9V16z" fill="#0e73d8"/></svg></button>
      <button class="app-btn run hot" aria-label="Teams"><svg viewBox="0 0 24 24"><circle cx="19" cy="7" r="3" fill="#5b63c7"/><circle cx="12" cy="5" r="4" fill="#7b83eb"/><path d="M9 9h14v8q-2 5-7 4t-7-4z" fill="#6f77de"/><path d="M0 6h12v12H0z" fill="#4b53bc"/><path d="M3 9h6M6 9v7" stroke="#fff" stroke-width="1.800"/></svg><b class="badge red">1</b></button>
      <button class="app-btn run" aria-label="TMWIN"><svg viewBox="0 0 24 24"><path d="M11 1h2.500v22H11z" fill="#8d9298"/><path d="M1 7l3-5h5q2 0 2 2v6q0 2-2 2H4z" fill="#21a02f"/><path d="M13.500 6q0-1 2-1h4l3.500 4-3.500 4h-4q-2 0-2-2z" fill="#2c63cf"/></svg></button>
      <button class="app-btn run active" aria-label="Citrix"><svg viewBox="0 0 24 24"><circle cx="12" cy="12" r="11.500" fill="#1583cf"/><path d="M9 20a8.300 8.300 0 1 1 8-1.500M8.500 15.500a4.700 4.700 0 1 1 6.500 0M12 12v1" fill="none" stroke="#fff" stroke-width="1.800"/><circle cx="12" cy="12.500" r="1.600" fill="#fff"/></svg></button>
    </div>
    <div class="tray">
      <svg viewBox="0 0 20 20"><path d="M5 12l5-5 5 5" fill="none" stroke="#222" stroke-width="1.500"/></svg>
      <svg viewBox="0 0 20 20"><path d="M5 15a4 4 0 0 1-1-7.500A6 6 0 0 1 15 7a4.300 4.300 0 0 1 1 8z" fill="#0f6cc4"/><path d="M4 15a4 4 0 0 1 1-4l5-1 9 4q-1 1-3 1z" fill="#31a8ee"/></svg>
      <svg viewBox="0 0 20 20"><path d="M7.500 5a2.500 2.500 0 0 1 5 0v5a2.500 2.500 0 0 1-5 0zM5 9.500a5 5 0 0 0 10 0M10 14.500V18" fill="none" stroke="#2758a8" stroke-width="1.500"/></svg>
      <svg viewBox="0 0 20 20"><path d="M13 3H2v11h12M5 17h9M8 14v3M14.500 3h4v5h-4zM16.500 8v9" fill="none" stroke="#222" stroke-width="1.300"/></svg>
      <svg viewBox="0 0 20 20"><path d="M2 8h3l4-3.500v11L5 12H2zM11.500 8q1.500 2 0 4M14 6q3 4 0 8" fill="none" stroke="#222" stroke-width="1.200"/><path d="M16 4.500q4 5.500 0 11" fill="none" stroke="#aaa"/></svg>
      <p>9:25 AM<br>3/12/2025</p>
    </div>
  </div>
</div>
</body>
</html>
```
FILE: styles.css
```css
* { box-sizing: border-box; }
body {
  margin: 0;
  background: #f0f0f0;
  color: #000;
  font: 11px/14px Roboto, "Liberation Sans", sans-serif;
}
p, h1 { margin: 0; font-weight: 400; }
button, input, select { font: inherit; color: inherit; margin: 0; border-radius: 0; }
button { padding: 0; border: 0; background: none; }
i { font-style: normal; }
.sprite { position: absolute; width: 0; height: 0; }
.ic { width: 16px; height: 16px; flex: none; display: block; }
.app { display: flex; flex-direction: column; min-height: 100vh; }
.blue { color: #0000f0; }

/* shared controls */
input:not([type]), select {
  height: 21px;
  padding: 0 3px;
  border: 1px solid #7a7a7a;
  background: #fff;
  min-width: 0;
  outline: 0;
}
input.blue { color: #0000f0; }
input.ro:not([type]) { background: #f0f0f0; box-shadow: inset 0 0 0 1px #fff; }
input.num { text-align: right; }
select {
  appearance: none;
  background: #fff url("data:image/svg+xml,%3Csvg xmlns='http://www.w3.org/2000/svg' viewBox='0 0 10 10'%3E%3Cpath d='M1 3l4 4 4-4' fill='none' stroke='%23444' stroke-width='1.200'/%3E%3C/svg%3E") no-repeat right 4px center / 10px 10px;
}
select.grey { background-color: #e1e1e1; border-color: #adadad; }
select.bold { background-image: url("data:image/svg+xml,%3Csvg xmlns='http://www.w3.org/2000/svg' viewBox='0 0 12 12'%3E%3Cpath d='M1 4l5 4 5-4' fill='none' stroke='%23333' stroke-width='2.400'/%3E%3C/svg%3E"); background-size: 12px 12px; background-position: right 6px center; }
.btn {
  display: flex;
  align-items: center;
  justify-content: center;
  gap: 5px;
  border: 1px solid #adadad;
  background: #e1e1e1;
}
.btn:disabled { background: #ccc; border-color: #bfbfbf; color: #838383; }
.look { display: flex; align-items: center; height: 21px; border: 1px solid #7a7a7a; background: #fff; padding-right: 4px; }
.look input:not([type]) { flex: 1; width: 0; height: 19px; border: 0; padding: 0 2px; background: none; }
.look .ic, .addr .ic { width: 14px; height: 14px; }
label { display: flex; align-items: center; white-space: nowrap; }
input[type="checkbox"] { appearance: none; width: 13px; height: 13px; margin-right: 3px; border: 1px solid #333; background: #fff; flex: none; }
input[type="checkbox"].mixed { background: #333 content-box; padding: 2px; box-shadow: inset 0 0 0 2px #fff; }
input[type="radio"] { appearance: none; width: 12px; height: 12px; margin-right: 4px; border: 1px solid #333; border-radius: 50%; background: #fff; flex: none; }
input[type="radio"]:checked { background: radial-gradient(#222 0 3px, #fff 4px); }
fieldset { margin: 0; padding: 0; border: 1px solid #dcdcdc; min-width: 0; }
legend { margin-left: 6px; padding: 0 2px 0 0; height: 14px; white-space: nowrap; }

/* title, menu, toolbar */
.titlebar { display: flex; align-items: center; height: 22px; padding: 0 2px; background: #fff; gap: 5px; }
.titlebar h1 { font-size: 12px; }
.winbtns { display: flex; margin-left: auto; }
.winbtns button { width: 46px; height: 22px; }
.winbtns svg { width: 10px; height: 10px; fill: none; stroke: #111; display: block; margin: auto; }
.menubar { display: flex; height: 22px; padding: 0 0 1px 7px; gap: 14px; align-items: center; background: #fff; border-bottom: 1px solid #a0a0a0; font-size: 12px; }
.menubar a { color: #000; text-decoration: none; }
.toolbar { display: flex; align-items: center; height: 25px; border-bottom: 1px solid #a0a0a0; }
.toolbar button { width: 23px; height: 23px; display: grid; place-items: center; color: #1a68c8; }
.toolbar button:disabled { color: #9a9a9a; }
.toolbar .narrow { width: 14px; }
.toolbar .narrow .ic { width: 8px; }
.toolbar .on { background: #b9dcf4; outline: 1px solid #99cbee; outline-offset: -1px; }
.sep { width: 1px; height: 20px; margin: 0 4px 0 3px; background: #8f8f8f; }

/* order header */
.form { display: flex; align-items: flex-start; padding-top: 4px; height: 240px; }
.bill { width: 330px; flex: none; padding-top: 5px; }
.fb { display: flex; align-items: center; padding-left: 90px; }
.fb label { width: 27px; }
.fb input { width: 124px; }
.kind { padding: 4px 0 0 90px; }
.billgrid { display: grid; grid-template-columns: 74px 150px 80px; padding: 49px 0 0 6px; justify-content: start; grid-template-rows: 61px 61px 21px; }
.reload { width: 63px; height: 23px; margin-top: 8px; }
.created { height: 60px; display: flex; flex-direction: column; padding: 1px 6px 0 7px; }
.created legend, .billto legend { margin-left: 0; }
.billto { grid-column: 2; height: 56px; display: grid; grid-template-columns: 70px 1fr; grid-auto-rows: 12px; padding: 2px 0 0 7px; }
.billto label { height: 12px; }
.miles { padding: 17px 0 0 20px; }
.miles label { height: 17px; color: #a0a0a0; }
.miles input { width: 50px; }
.currency {
  grid-column: 2;
  border-color: #adadad;
  background-image: url("data:image/svg+xml,%3Csvg xmlns='http://www.w3.org/2000/svg' viewBox='0 0 17 17'%3E%3Cpath d='M.5.5h16v16H.5z' fill='%23e1e1e1' stroke='%23adadad'/%3E%3Cpath d='M4.500 7l4 4 4-4' fill='none' stroke='%23444' stroke-width='1.200'/%3E%3C/svg%3E");
  background-size: 17px 17px;
  background-position: right 1px center;
}
.callercol { width: 212px; flex: none; }
.party { width: 208px; flex: none; }
.shipper { width: 212px; height: 235px; margin-left: 49px; }
.consignee { height: 235px; width: 209px; margin-left: 47px; }
.callercol .party { height: 177px; }
.code { display: flex; align-items: center; padding: 1px 4px 9px; }
.mini { width: 15px; height: 20px; flex: none; }
.code input { flex: 1; margin: 0 4px 0 3px; }
.code .pic { width: 21px; height: 20px; margin-right: 5px; }
.addr { margin: 0 3px 4px 7px; height: 80px; background: #fff; }
.addr p { height: 16px; line-height: 16px; }
.addr .hint { color: #808080; }
.two { display: flex; align-items: center; }
.two span:first-child { width: 145px; }
.two span + span { width: 34px; }
.line { display: flex; align-items: center; margin: 0 3px 3px 7px; }
.line select { width: 67px; flex: none; }
.line .tel { width: 83px; }
.line .x { width: 8px; padding: 5px 0 0 1px; }
.line .ext { width: 35px; }
.line .contact { flex: 1; margin-right: 4px; }
.shipper .line { margin-right: 7px; }
.shipper .addr { margin-right: 7px; }
.shipper .code { padding-right: 5px; }
.checks { display: flex; align-items: center; height: 14px; }
.checks span { width: 45px; }
.checks label { margin-right: 6px; }
.checks label:nth-of-type(1) { width: 60px; }
.checks label:nth-of-type(2) { width: 42px; }
.dates { display: grid; grid-template-columns: 104px 104px; }
.dates .look + .look { margin-left: -1px; }
.zone { display: flex; justify-content: flex-end; align-items: center; padding: 1px 25px 0 0; gap: 4px; }
.consignee .zone { padding-right: 23px; }
.zone .look { width: 121px; }
.distance { margin: 4px 0 0 3px; padding: 5px 3px 1px 2px; border: 1px solid #dcdcdc; width: 209px; }
.drow { display: flex; align-items: center; gap: 2px; }
.dist { width: 52px; }
.unit { width: 48px; }
.drow label { margin-left: 3px; }
.drow .btn { width: 50px; height: 20px; margin-left: auto; }
.decl { padding-top: 4px; justify-content: flex-end; }
.decl input { width: 125px; }

.options { width: 274px; height: 235px; flex: none; margin-left: 16px; }
.optcols { display: flex; }
.optleft { width: 113px; display: flex; flex-direction: column; flex: none; }
.optleft .btn { height: 23px; margin-top: 2px; width: 111px; }
.optleft .btn + .btn { margin-top: 10px; }
.optleft .look { width: 103px; }
.optleft label { height: 20px; }
.optleft .look + label { height: 20px; }
.optleft select + label { height: 16px; }
.optright { padding: 0 0 0 16px; margin-top: -4px; flex: 1; }
.optright label { height: 17px; }
.combo { width: 103px; height: 21px; border: 1px solid #7a7a7a; background: #fff; display: flex; align-items: center; justify-content: space-between; padding: 0 4px 0 2px; margin-bottom: 10px; }
.combo input:not([type]) { width: 55px; height: 14px; border: 0; padding: 0; background: #0078d7; color: #fff; }
.combo svg { width: 10px; height: 10px; fill: none; stroke: #444; stroke-width: 1.2; }
#wait { display: block; width: 118px; margin-bottom: 7px; }
.optright .out { margin-left: -9px; }
#pend { width: 151px; }

.actions { width: 112px; flex: none; margin-left: 6px; display: grid; gap: 1px; grid-template-rows: repeat(7, 23px) 43px 23px; }

.trace { width: 375px; flex: none; margin-left: 13px; }
.tracebox { display: flex; flex-direction: column; height: 177px; padding: 1px; border: 1px solid #a5a8b0; background: #fff; overflow: hidden; }
table { width: 100%; table-layout: fixed; border-collapse: collapse; font-size: 12px; }
th, td { padding: 0 2px; height: 20px; text-align: left; font-weight: 400; white-space: nowrap; overflow: hidden; border-right: 1px solid #f0f0f0; }
th { padding: 0 1px; border-right-color: #dcdcdc; border-bottom: 1px solid #dcdcdc; }
th.sorted { background: #f0f0f0; }
th.sorted b { color: #0000f0; font-family: "DejaVu Sans", sans-serif; font-size: 10px; }
.alt td { background: #f0f0f0; }
td.mark, .alt td.mark { padding: 0 0 0 3px; background: #fff; border-right-color: #dcdcdc; border-bottom: 1px solid #dcdcdc; }
.current::before { content: ""; display: block; width: 0; border: 5px solid transparent; border-left: 6px solid #000; border-right: 0; }
.c-mark { width: 12px; }
.c-num { width: 102px; }
.c-type { width: 37px; }
.c-r { width: 12px; }
.hscroll { display: flex; align-items: center; height: 15px; margin-top: auto; background: #f0f0f0; padding: 0 3px; gap: 4px; flex: none; }
.hscroll svg { width: 10px; height: 10px; fill: none; stroke: #555; stroke-width: 2; }
.hscroll i { width: 17px; height: 15px; margin-right: auto; background: #cdcdcd; }
.edi { display: flex; align-items: center; padding: 13px 0 3px 18px; }
.edi label { width: 41px; }
.edi input { width: 124px; }
.tracenav { display: flex; align-items: center; }
.navbar { display: flex; gap: 1px; }
.navbar .btn { width: 22px; height: 20px; color: #1a68c8; }
.navbar .btn:disabled { color: #969696; }
.tracenav label { margin: 0 4px 0 12px; }
.tracenav .look { width: 39px; }
.ttname { margin-left: 9px; white-space: nowrap; }

/* tabs */
.tabs {
  display: grid;
  grid-template-columns: 53px 48px 44px 44px 55px 47px 41px 43px 42px 42px 56px 53px 64px 74px 75px 65px 59px 59px 53px 61px 40px;
  align-items: end;
  height: 22px;
  margin-top: 2px;
  padding-left: 3px;
  border-bottom: 1px solid #dcdcdc;
}
.tabs button { height: 19px; padding: 1px 0 0 1px; border: 1px solid #dcdcdc; border-width: 1px 1px 0 0; white-space: nowrap; }
.tabs button:first-child { border-left-width: 1px; }
.tabs .start { text-align: left; padding-left: 5px; }
.tabs .sel { height: 22px; margin-bottom: -1px; background: #fff; padding: 0 0 2px 6px; }

/* load details page */
.page { flex: 1; display: flex; margin-right: 2px; padding: 2px; background: #fff; border: 1px solid #dcdcdc; border-top: 0; }
.load { flex: 1; background: #f0f0f0; padding: 0 1px 6px; display: flex; }
.load legend { margin-left: 6px; }
.loadinner { flex: 1; display: flex; flex-direction: column; padding: 0 5px 0 2px; border: 1px solid #a0a0a0; border-top: 0; border-left: 0; min-width: 0; }
.gridbox { flex: 1; display: flex; flex-direction: column; border: 1px solid #a0a0a0; margin-top: 2px; padding: 1px; background: #fff; min-height: 300px; }
.details th { height: 19px; }
.details td { height: 18px; border-bottom: 1px solid #f0f0f0; }
.details td.editing { background: linear-gradient(#000, #000) 2px 2px / 1px 14px no-repeat; }
.d42 { width: 42px; } .d54 { width: 54px; } .d60 { width: 60px; }
.d61 { width: 61px; } .d64 { width: 64px; } .d69 { width: 69px; } .d75 { width: 75px; }
.d77 { width: 77px; } .d80 { width: 80px; } .d96 { width: 96px; } .d108 { width: 108px; }
.d114 { width: 114px; } .d195 { width: 195px; }
.loadfoot { display: flex; align-items: flex-start; gap: 7px; padding: 31px 0 0 3px; height: 79px; }
.rated { width: 259px; height: 45px; margin-top: 2px; border: 1px solid #a0a0a0; padding: 4px 8px 0 7px; }
.ratedrow { display: flex; height: 15px; align-items: center; }
.ratedrow label { width: 112px; }
.ratedrow + .ratedrow { height: 23px; gap: 8px; }
.ratedrow .ro { width: 177px; }
.ratedrow .look { width: 57px; }

/* status strip */
.status { display: flex; gap: 4px; margin-top: 13px; padding: 2px 0 1px 1px; border-top: 1px solid #dcdcdc; border-bottom: 1px solid #c8b8b0; color: #fff; font-size: 12px; height: 20px; }
.status span { background: #f00; padding: 0 10px; white-space: nowrap; line-height: 16px; }
.status .tight { margin-left: -3px; padding: 0 10px 0 0; }
.status i { display: inline-block; width: 4px; height: 16px; margin-right: 8px; overflow: hidden; font-size: 11px; vertical-align: top; direction: rtl; }
.status .fill { flex: 1; margin-left: -3px; padding: 0; }

/* taskbar */
.taskbar { display: flex; align-items: center; height: 47px; background: linear-gradient(90deg, #fbead6, #fbedd6 45%, #f3e0d7 75%, #f0dcd6); font-size: 12px; line-height: 16px; }
.weather { position: relative; display: flex; align-items: center; width: 551px; padding-left: 19px; gap: 3px; }
.weather > svg { width: 28px; height: 32px; }
.weather .badge { left: 30px; top: -1px; }
.weather span { color: #5c5650; }
.badge { position: absolute; display: grid; place-items: center; width: 16px; height: 16px; border-radius: 50%; color: #fff; font-size: 11px; font-weight: 400; line-height: 16px; }
.badge.red { background: #c42b1c; }
.badge.blue { background: #0a78d4; }
.app-btn .badge svg { width: 10px; height: 10px; }
.apps { display: flex; align-items: center; gap: 4px; margin-left: -7px; }
.app-btn { position: relative; width: 40px; height: 40px; display: grid; place-items: center; border-radius: 4px; }
.app-btn > svg { width: 24px; height: 24px; }
.app-btn .badge { right: 0; top: 2px; }
.letter { width: 24px; height: 24px; background: #1c3faa; color: #fff; font: bold 20px/24px Roboto, sans-serif; text-align: center; }
.run::after { content: ""; position: absolute; bottom: 1px; left: 17px; width: 6px; height: 3px; border-radius: 2px; background: #8b8580; }
.run.hot { background: #e8aaa6; }
.run.hot::after { background: #c42b1c; }
.run.active { background: #f8eee9; }
.run.active::after { left: 12px; width: 16px; background: #0a78d4; }
.search { width: 219px; height: 32px; padding: 0 4px 0 11px; gap: 10px; border-radius: 16px; background: #fef9f2; border: 1px solid #e6d8c6; }
.search > svg { width: 15px; height: 15px; fill: none; stroke: #222; stroke-width: 2; flex: none; }
.search input:not([type]) { flex: 1; height: 24px; border: 0; background: none; padding: 0; font-size: 14px; }
.search input::placeholder { color: #5f5a55; opacity: 1; }
.search > .flower { width: 48px; height: 26px; stroke-width: 1; stroke: none; }
.tray { display: flex; align-items: center; margin-left: auto; padding-right: 19px; gap: 12px; }
.tray svg { width: 20px; height: 20px; }
.tray svg:nth-of-type(5) { margin-left: -9px; }
.tray p { text-align: right; min-width: 58px; }
```
